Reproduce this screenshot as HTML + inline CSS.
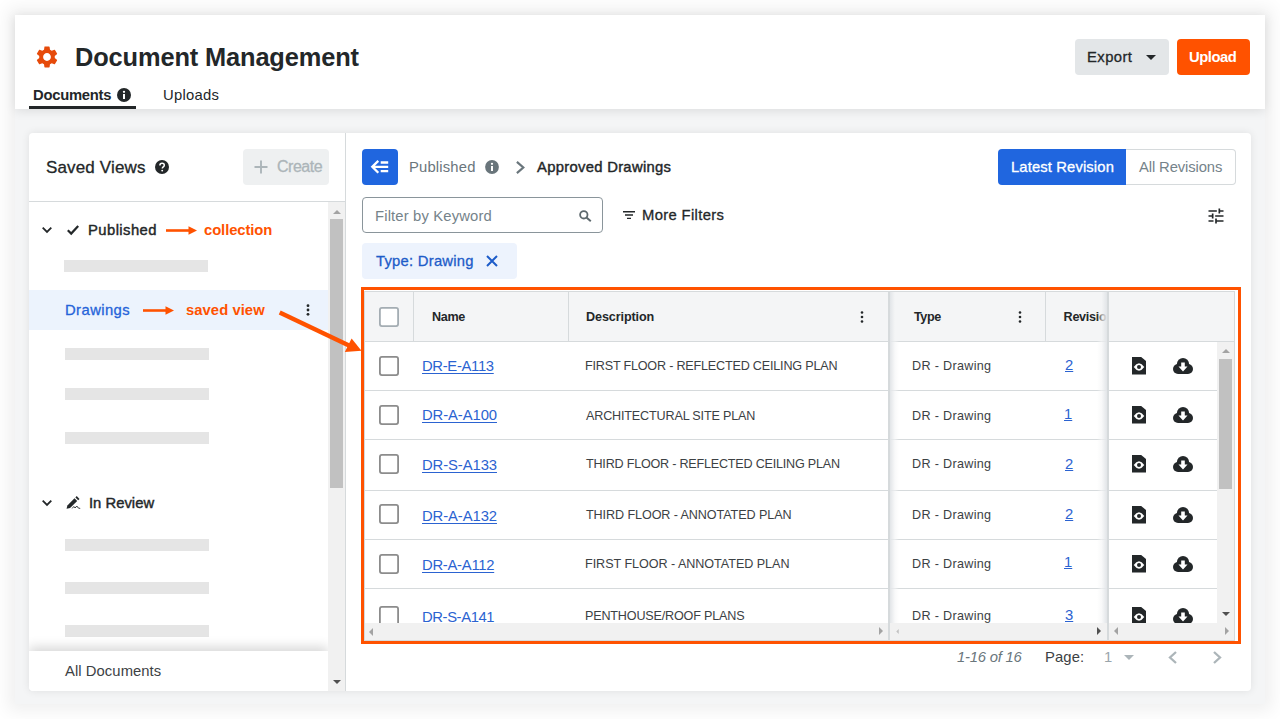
<!DOCTYPE html>
<html lang="en">
<head>
<meta charset="utf-8">
<title>Document Management</title>
<style>
*{box-sizing:border-box;margin:0;padding:0}
html,body{width:1280px;height:719px;overflow:hidden;background:#fff}
body{font-family:"Liberation Sans",sans-serif;color:#232729;position:relative;font-size:14px}
.a{position:absolute}
.t{position:absolute;white-space:nowrap;line-height:1}
svg{position:absolute;overflow:visible}
.bar{position:absolute;height:12px;width:144px;background:#e5e5e5}
.cb{position:absolute;left:379px;width:20px;height:20px;border:1.7px solid #8c8c8c;border-radius:2.500px;background:#fff}
.hl{position:absolute;height:1px;background:#d6dadc}
.vl{position:absolute;width:1px;background:#d6dadc}
</style>
</head>
<body>
<!-- app background -->
<div class="a" style="left:15px;top:15px;width:1250px;height:689px;background:#f4f5f6;box-shadow:0 0 16px 7px rgba(0,0,0,.062)"></div>
<!-- header -->
<div class="a" style="left:15px;top:15px;width:1250px;height:94px;background:#fff;box-shadow:0 2px 10px rgba(0,0,0,.10)"></div>
<svg style="left:33.900px;top:44px" width="26" height="26" viewBox="0 0 24 24"><path fill="#e64a0a" d="M19.14 12.94c.04-.3.06-.61.06-.94 0-.32-.02-.64-.07-.94l2.03-1.58a.49.49 0 0 0 .12-.61l-1.92-3.32a.488.488 0 0 0-.59-.22l-2.39.96c-.5-.38-1.03-.7-1.62-.94l-.36-2.54a.484.484 0 0 0-.48-.41h-3.84c-.24 0-.43.17-.47.41l-.36 2.54c-.59.24-1.13.57-1.62.94l-2.39-.96c-.22-.08-.47 0-.59.22L2.74 8.87c-.12.21-.08.47.12.61l2.03 1.58c-.05.3-.09.63-.09.94s.02.64.07.94l-2.03 1.58a.49.49 0 0 0-.12.61l1.92 3.32c.12.22.37.29.59.22l2.39-.96c.5.38 1.03.7 1.62.94l.36 2.54c.05.24.24.41.48.41h3.84c.24 0 .44-.17.47-.41l.36-2.54c.59-.24 1.13-.56 1.62-.94l2.39.96c.22.08.47 0 .59-.22l1.92-3.32c.12-.22.07-.47-.12-.61l-2.01-1.58zM12 15.6c-1.98 0-3.6-1.62-3.6-3.6s1.62-3.6 3.6-3.6 3.6 1.62 3.6 3.6-1.62 3.6-3.6 3.6z"/></svg>
<div class="a" style="left:29px;top:106px;width:107px;height:3px;background:#232729"></div>
<svg style="left:117px;top:88px" width="14" height="14" viewBox="0 0 14 14"><circle cx="7" cy="7" r="7" fill="#232729"/><rect x="6" y="6" width="2" height="5" fill="#fff"/><circle cx="7" cy="3.8" r="1.15" fill="#fff"/></svg>
<div class="a" style="left:1075px;top:39px;width:94px;height:36px;border-radius:4px;background:#e3e6e8"></div>
<svg style="left:1146px;top:54.5px" width="10" height="5" viewBox="0 0 10 5"><path d="M0 0h10L5 5z" fill="#232729"/></svg>
<div class="a" style="left:1177px;top:39px;width:73px;height:36px;border-radius:4px;background:#ff5200"></div>

<!-- cards -->
<div class="a" style="left:29px;top:133px;width:1222px;height:558px;background:#fff;border-radius:4px;box-shadow:0 0 8px rgba(0,0,0,.09)"></div>
<div class="vl" style="left:345px;top:133px;height:558px;background:#d6dadc"></div>

<!-- sidebar -->
<div class="a" style="left:243px;top:149px;width:86px;height:36px;border-radius:4px;background:#eef0f1"></div>
<svg style="left:253.5px;top:160px" width="14" height="14" viewBox="0 0 14 14"><path d="M7 0.500v13M0.500 7h13" stroke="#acb5b9" stroke-width="1.900" fill="none"/></svg>
<svg style="left:155px;top:160px" width="14" height="14" viewBox="0 0 14 14"><circle cx="7" cy="7" r="7" fill="#232729"/><path d="M4.9 5.4c0-1.3 1-2.1 2.2-2.1 1.300 0 2.200.8 2.200 1.900 0 1.600-2 1.700-2 3.200" stroke="#fff" stroke-width="1.5" fill="none"/><circle cx="7.200" cy="10.600" r=".95" fill="#fff"/></svg>
<div class="hl" style="left:29px;top:201px;width:316px"></div>
<!-- scrollbar -->
<div class="a" style="left:328px;top:202px;width:17px;height:489px;background:#f1f1f1"></div>
<div class="a" style="left:330px;top:219px;width:13px;height:269px;background:#c1c1c1"></div>
<svg style="left:332.500px;top:209.500px" width="8" height="4" viewBox="0 0 8 4"><path d="M0 4h8L4 0z" fill="#a3a3a3"/></svg>
<svg style="left:332.500px;top:679.500px" width="8" height="4" viewBox="0 0 8 4"><path d="M0 0h8L4 4z" fill="#505050"/></svg>
<!-- list -->
<svg style="left:42.200px;top:227.300px" width="10" height="6" viewBox="0 0 10 6"><path d="M0.700 0.700L5 5l4.300-4.300" stroke="#232729" stroke-width="1.800" fill="none"/></svg>
<svg style="left:67px;top:225px" width="12" height="10" viewBox="0 0 12 10"><path d="M0.800 5.300L4.200 8.600 11.200 1" stroke="#232729" stroke-width="2.200" fill="none"/></svg>
<svg style="left:166px;top:226px" width="32" height="9" viewBox="0 0 32 9"><path d="M0 4.500h25" stroke="#ff5200" stroke-width="2.600"/><path d="M22.500 0.300L31 4.500 22.500 8.700z" fill="#ff5200"/></svg>
<div class="bar" style="left:64px;top:260px"></div>
<div class="a" style="left:29px;top:290px;width:299px;height:40px;background:#ecf3fd"></div>
<svg style="left:142.500px;top:306px" width="32" height="9" viewBox="0 0 32 9"><path d="M0 4.500h25" stroke="#ff5200" stroke-width="2.600"/><path d="M22.500 0.300L31 4.500 22.500 8.700z" fill="#ff5200"/></svg>
<svg style="left:306px;top:304px" width="4" height="12" viewBox="0 0 4 12"><circle cx="2" cy="1.700" r="1.400" fill="#232729"/><circle cx="2" cy="6" r="1.400" fill="#232729"/><circle cx="2" cy="10.300" r="1.400" fill="#232729"/></svg>
<div class="bar" style="left:65px;top:348px"></div>
<div class="bar" style="left:65px;top:388px"></div>
<div class="bar" style="left:65px;top:432px"></div>
<svg style="left:42.200px;top:500.200px" width="10" height="6" viewBox="0 0 10 6"><path d="M0.700 0.700L5 5l4.300-4.300" stroke="#232729" stroke-width="1.800" fill="none"/></svg>
<svg style="left:65.500px;top:496px" width="15" height="13" viewBox="0 0 15 13"><path d="M0.600 12.700L1.400 9.400 8.500 2.300l2.700 2.700L4.100 12.100z" fill="#232729"/><path d="M9.400 1.400L10.700 0.100l2.800 2.800-1.300 1.300z" fill="#232729"/><path d="M6.200 12.400l1.600-1.900 1.300 1.500 1.700-2 1.600 2.100 1.800 0.300" stroke="#232729" stroke-width="0.900" fill="none"/></svg>
<div class="bar" style="left:65px;top:539px"></div>
<div class="bar" style="left:65px;top:582px"></div>
<div class="bar" style="left:65px;top:625px"></div>
<div class="a" style="left:29px;top:651px;width:299px;height:40px;background:#fff;border-radius:0 0 0 4px;box-shadow:0 -4px 12px rgba(0,0,0,.16);clip-path:inset(-24px 0 0 0)"></div>

<!-- right top -->
<div class="a" style="left:362px;top:149px;width:36px;height:36px;border-radius:4px;background:#2066df"></div>
<svg style="left:370px;top:160px" width="19" height="14" viewBox="0 0 19 14"><path d="M2.500 6.800h15.700M8.300 0.900L2.300 6.800l6 5.900" stroke="#fff" stroke-width="2.300" fill="none"/><path d="M10.700 2.500h7.500M10.700 11.200h7.500" stroke="#fff" stroke-width="2.300" fill="none"/></svg>
<svg style="left:484.800px;top:159.800px" width="14" height="14" viewBox="0 0 14 14"><circle cx="7" cy="7" r="6.900" fill="#69757b"/><rect x="6" y="6" width="2" height="5" fill="#fff"/><circle cx="7" cy="3.800" r="1.150" fill="#fff"/></svg>
<svg style="left:515.800px;top:160.500px" width="9" height="13" viewBox="0 0 9 13"><path d="M0.900 0.900L7.300 6.500 0.900 12.100" stroke="#6a767c" stroke-width="2.200" fill="none"/></svg>
<div class="a" style="left:998px;top:149px;width:128px;height:36px;border-radius:4px 0 0 4px;background:#2066df"></div>
<div class="a" style="left:1126px;top:149px;width:110px;height:36px;border-radius:0 4px 4px 0;border:1px solid #d6dadc;border-left:none;background:#fff"></div>
<div class="a" style="left:362px;top:197px;width:241px;height:36px;border-radius:4px;border:1px solid #8a959b;background:#fff"></div>
<svg style="left:579px;top:209.500px" width="13" height="12" viewBox="0 0 13 12"><circle cx="4.800" cy="4.800" r="3.700" stroke="#5e696e" stroke-width="1.800" fill="none"/><path d="M7.500 7.500l4.300 3.800" stroke="#5e696e" stroke-width="2" fill="none"/></svg>
<svg style="left:623px;top:211px" width="12" height="9" viewBox="0 0 12 9"><path d="M0 0.700h12M2 4h8M4 7.400h4" stroke="#232729" stroke-width="1.400" fill="none"/></svg>
<svg style="left:1205.500px;top:205.500px" width="20" height="20" viewBox="0 0 24 24"><path fill="#232729" d="M3 17v2h6v-2H3zM3 5v2h10V5H3zm10 16v-2h8v-2h-8v-2h-2v6h2zM7 9v2H3v2h4v2h2V9H7zm14 4v-2H11v2h10zm-6-4h2V7h4V5h-4V3h-2v6z"/></svg>
<div class="a" style="left:362px;top:243px;width:155px;height:36px;border-radius:4px;background:#edf3fd"></div>
<svg style="left:486px;top:255px" width="12" height="12" viewBox="0 0 12 12"><path d="M1 1l10 10M11 1L1 11" stroke="#1d5cc9" stroke-width="2" fill="none"/></svg>

<!-- table -->
<div class="a" id="grid" style="left:364px;top:291px;width:871px;height:350px;background:#fff;border:1px solid #d6dadc;overflow:hidden"></div>
<div class="a" id="gridc" style="left:0;top:0;width:1280px;height:719px;clip-path:inset(292px 46px 79px 365px)">
  <!-- header bg -->
  <div class="a" style="left:365px;top:291px;width:869px;height:50px;background:#f4f5f6"></div>
  <div class="hl" style="left:365px;top:341px;width:869px"></div>
  <div class="vl" style="left:413px;top:291px;height:50px"></div>
  <div class="vl" style="left:568px;top:291px;height:50px"></div>
  <div class="vl" style="left:1045px;top:291px;height:50px"></div>
  <!-- row lines -->
  <div class="hl" style="left:365px;top:390px;width:852px"></div>
  <div class="hl" style="left:365px;top:439px;width:852px"></div>
  <div class="hl" style="left:365px;top:490px;width:852px"></div>
  <div class="hl" style="left:365px;top:539px;width:852px"></div>
  <div class="hl" style="left:365px;top:588px;width:852px"></div>
  <!-- checkboxes -->
  <svg style="left:379px;top:307px" width="20" height="20" viewBox="0 0 20 20"><rect x="0.900" y="0.900" width="18.200" height="18.200" rx="2" fill="#fff" stroke="#a4adb3" stroke-width="1.800"/></svg>
  <svg style="left:379px;top:356px" width="20" height="20" viewBox="0 0 20 20"><rect x="0.900" y="0.900" width="18.200" height="18.200" rx="2" fill="#fff" stroke="#8c8c8c" stroke-width="1.800"/></svg>
  <svg style="left:379px;top:405px" width="20" height="20" viewBox="0 0 20 20"><rect x="0.900" y="0.900" width="18.200" height="18.200" rx="2" fill="#fff" stroke="#8c8c8c" stroke-width="1.800"/></svg>
  <svg style="left:379px;top:454px" width="20" height="20" viewBox="0 0 20 20"><rect x="0.900" y="0.900" width="18.200" height="18.200" rx="2" fill="#fff" stroke="#8c8c8c" stroke-width="1.800"/></svg>
  <svg style="left:379px;top:504px" width="20" height="20" viewBox="0 0 20 20"><rect x="0.900" y="0.900" width="18.200" height="18.200" rx="2" fill="#fff" stroke="#8c8c8c" stroke-width="1.800"/></svg>
  <svg style="left:379px;top:554px" width="20" height="20" viewBox="0 0 20 20"><rect x="0.900" y="0.900" width="18.200" height="18.200" rx="2" fill="#fff" stroke="#8c8c8c" stroke-width="1.800"/></svg>
  <svg style="left:379px;top:606px" width="20" height="20" viewBox="0 0 20 20"><rect x="0.900" y="0.900" width="18.200" height="18.200" rx="2" fill="#fff" stroke="#8c8c8c" stroke-width="1.800"/></svg>
  <span class="t" style="left:422.00px;top:359.00px;font-size:14.8px;color:#2b63d1;text-decoration:underline;text-underline-offset:1.5px;text-decoration-thickness:1px;letter-spacing:-0.312px;">DR-E-A113</span><span class="t" style="left:422.00px;top:408.00px;font-size:14.8px;color:#2b63d1;text-decoration:underline;text-underline-offset:1.5px;text-decoration-thickness:1px;letter-spacing:-0.075px;">DR-A-A100</span><span class="t" style="left:422.00px;top:458.00px;font-size:14.8px;color:#2b63d1;text-decoration:underline;text-underline-offset:1.5px;text-decoration-thickness:1px;letter-spacing:-0.075px;">DR-S-A133</span><span class="t" style="left:422.00px;top:509.00px;font-size:14.8px;color:#2b63d1;text-decoration:underline;text-underline-offset:1.5px;text-decoration-thickness:1px;letter-spacing:-0.075px;">DR-A-A132</span><span class="t" style="left:422.00px;top:558.00px;font-size:14.8px;color:#2b63d1;text-decoration:underline;text-underline-offset:1.5px;text-decoration-thickness:1px;letter-spacing:-0.262px;">DR-A-A112</span><span class="t" style="left:422.00px;top:610.00px;font-size:14.8px;color:#2b63d1;text-decoration:underline;text-underline-offset:1.5px;text-decoration-thickness:1px;letter-spacing:-0.387px;">DR-S-A141</span><span class="t" style="left:585.00px;top:360.00px;font-size:12.6px;color:#3c4144;letter-spacing:-0.197px;">FIRST FLOOR - REFLECTED CEILING PLAN</span><span class="t" style="left:586.00px;top:410.00px;font-size:12.6px;color:#3c4144;letter-spacing:-0.168px;">ARCHITECTURAL SITE PLAN</span><span class="t" style="left:586.00px;top:458.00px;font-size:12.6px;color:#3c4144;letter-spacing:-0.220px;">THIRD FLOOR - REFLECTED CEILING PLAN</span><span class="t" style="left:586.00px;top:509.00px;font-size:12.6px;color:#3c4144;letter-spacing:-0.093px;">THIRD FLOOR - ANNOTATED PLAN</span><span class="t" style="left:585.00px;top:558.00px;font-size:12.6px;color:#3c4144;letter-spacing:-0.044px;">FIRST FLOOR - ANNOTATED PLAN</span><span class="t" style="left:585.00px;top:610.00px;font-size:12.6px;color:#3c4144;letter-spacing:-0.179px;">PENTHOUSE/ROOF PLANS</span><span class="t" style="left:912.00px;top:360.00px;font-size:12.6px;color:#3c4144;letter-spacing:0.318px;">DR - Drawing</span><span class="t" style="left:912.00px;top:410.00px;font-size:12.6px;color:#3c4144;letter-spacing:0.318px;">DR - Drawing</span><span class="t" style="left:912.00px;top:458.00px;font-size:12.6px;color:#3c4144;letter-spacing:0.318px;">DR - Drawing</span><span class="t" style="left:912.00px;top:509.00px;font-size:12.6px;color:#3c4144;letter-spacing:0.318px;">DR - Drawing</span><span class="t" style="left:912.00px;top:558.00px;font-size:12.6px;color:#3c4144;letter-spacing:0.318px;">DR - Drawing</span><span class="t" style="left:912.00px;top:610.00px;font-size:12.6px;color:#3c4144;letter-spacing:0.318px;">DR - Drawing</span><span class="t" style="left:1065.00px;top:358.00px;font-size:14.8px;color:#2b63d1;text-decoration:underline;text-underline-offset:0.5px;text-decoration-thickness:1px;letter-spacing:0.000px;">2</span><span class="t" style="left:1064.00px;top:407.00px;font-size:14.8px;color:#2b63d1;text-decoration:underline;text-underline-offset:0.5px;text-decoration-thickness:1px;letter-spacing:0.000px;">1</span><span class="t" style="left:1065.00px;top:457.00px;font-size:14.8px;color:#2b63d1;text-decoration:underline;text-underline-offset:0.5px;text-decoration-thickness:1px;letter-spacing:0.000px;">2</span><span class="t" style="left:1065.00px;top:507.00px;font-size:14.8px;color:#2b63d1;text-decoration:underline;text-underline-offset:0.5px;text-decoration-thickness:1px;letter-spacing:0.000px;">2</span><span class="t" style="left:1064.00px;top:555.00px;font-size:14.8px;color:#2b63d1;text-decoration:underline;text-underline-offset:0.5px;text-decoration-thickness:1px;letter-spacing:0.000px;">1</span><span class="t" style="left:1065.00px;top:608.00px;font-size:14.8px;color:#2b63d1;text-decoration:underline;text-underline-offset:0.5px;text-decoration-thickness:1px;letter-spacing:0.000px;">3</span>
  <span class="t nf" style="left:1063.600px;top:310.500px;font-size:12.600px;font-weight:bold;letter-spacing:-0.300px">Revision</span>
  <!-- kebabs -->
  <svg style="left:860px;top:311px" width="4" height="12" viewBox="0 0 4 12"><circle cx="2" cy="1.500" r="1.300" fill="#232729"/><circle cx="2" cy="6" r="1.300" fill="#232729"/><circle cx="2" cy="10.500" r="1.300" fill="#232729"/></svg>
  <svg style="left:1017.500px;top:311px" width="4" height="12" viewBox="0 0 4 12"><circle cx="2" cy="1.500" r="1.300" fill="#232729"/><circle cx="2" cy="6" r="1.300" fill="#232729"/><circle cx="2" cy="10.500" r="1.300" fill="#232729"/></svg>
  <!-- pinned left shadow -->
  <div class="a" style="left:888px;top:291px;width:2px;height:350px;background:#d6dadc"></div>
  <div class="a" style="left:890px;top:291px;width:9px;height:332px;background:linear-gradient(to right,rgba(226,229,232,1),rgba(244,245,246,.6) 55%,rgba(255,255,255,0))"></div>
  <!-- pinned right -->
  <div class="a" style="left:1097px;top:291px;width:10px;height:332px;background:linear-gradient(to left,rgba(226,229,232,1),rgba(244,245,246,.6) 55%,rgba(255,255,255,0))"></div>
  <div class="a" style="left:1107px;top:291px;width:128px;height:50px;background:#f4f5f6"></div>
  <div class="a" style="left:1107px;top:342px;width:110px;height:281px;background:#fff"></div>
  <div class="hl" style="left:1107px;top:341px;width:128px"></div>
  <div class="hl" style="left:1107px;top:390px;width:110px"></div>
  <div class="hl" style="left:1107px;top:439px;width:110px"></div>
  <div class="hl" style="left:1107px;top:490px;width:110px"></div>
  <div class="hl" style="left:1107px;top:539px;width:110px"></div>
  <div class="hl" style="left:1107px;top:588px;width:110px"></div>
  <div class="a" style="left:1107px;top:291px;width:2px;height:350px;background:#d6dadc"></div>
  <svg style="left:1132px;top:357.2px" width="14" height="17.600" viewBox="0 0 14 17.600"><path fill="#232729" d="M0 0h9.200l4.800 4v13.600H0z"/><path d="M1.700 10Q7 2.700 12.300 10Q7 17.300 1.700 10z" fill="#fff"/><circle cx="7" cy="10" r="2" fill="#232729"/></svg><svg style="left:1173px;top:358.0px" width="20" height="16" viewBox="0 0 20 16"><g fill="#232729"><circle cx="10" cy="6.100" r="6.100"/><circle cx="5" cy="11" r="5"/><circle cx="15" cy="11" r="5"/><rect x="5" y="8" width="10" height="8"/></g><path fill="#fff" d="M8.200 4.500h3.600v4h2.700L10 13.400 5.500 8.500h2.700z"/></svg><svg style="left:1132px;top:406.2px" width="14" height="17.600" viewBox="0 0 14 17.600"><path fill="#232729" d="M0 0h9.200l4.800 4v13.600H0z"/><path d="M1.700 10Q7 2.700 12.300 10Q7 17.300 1.700 10z" fill="#fff"/><circle cx="7" cy="10" r="2" fill="#232729"/></svg><svg style="left:1173px;top:407.0px" width="20" height="16" viewBox="0 0 20 16"><g fill="#232729"><circle cx="10" cy="6.100" r="6.100"/><circle cx="5" cy="11" r="5"/><circle cx="15" cy="11" r="5"/><rect x="5" y="8" width="10" height="8"/></g><path fill="#fff" d="M8.200 4.500h3.600v4h2.700L10 13.400 5.500 8.500h2.700z"/></svg><svg style="left:1132px;top:455.2px" width="14" height="17.600" viewBox="0 0 14 17.600"><path fill="#232729" d="M0 0h9.200l4.800 4v13.600H0z"/><path d="M1.700 10Q7 2.700 12.300 10Q7 17.300 1.700 10z" fill="#fff"/><circle cx="7" cy="10" r="2" fill="#232729"/></svg><svg style="left:1173px;top:456.0px" width="20" height="16" viewBox="0 0 20 16"><g fill="#232729"><circle cx="10" cy="6.100" r="6.100"/><circle cx="5" cy="11" r="5"/><circle cx="15" cy="11" r="5"/><rect x="5" y="8" width="10" height="8"/></g><path fill="#fff" d="M8.200 4.500h3.600v4h2.700L10 13.400 5.500 8.500h2.700z"/></svg><svg style="left:1132px;top:505.7px" width="14" height="17.600" viewBox="0 0 14 17.600"><path fill="#232729" d="M0 0h9.200l4.800 4v13.600H0z"/><path d="M1.700 10Q7 2.700 12.300 10Q7 17.300 1.700 10z" fill="#fff"/><circle cx="7" cy="10" r="2" fill="#232729"/></svg><svg style="left:1173px;top:506.5px" width="20" height="16" viewBox="0 0 20 16"><g fill="#232729"><circle cx="10" cy="6.100" r="6.100"/><circle cx="5" cy="11" r="5"/><circle cx="15" cy="11" r="5"/><rect x="5" y="8" width="10" height="8"/></g><path fill="#fff" d="M8.200 4.500h3.600v4h2.700L10 13.400 5.500 8.500h2.700z"/></svg><svg style="left:1132px;top:554.7px" width="14" height="17.600" viewBox="0 0 14 17.600"><path fill="#232729" d="M0 0h9.200l4.800 4v13.600H0z"/><path d="M1.700 10Q7 2.700 12.300 10Q7 17.300 1.700 10z" fill="#fff"/><circle cx="7" cy="10" r="2" fill="#232729"/></svg><svg style="left:1173px;top:555.5px" width="20" height="16" viewBox="0 0 20 16"><g fill="#232729"><circle cx="10" cy="6.100" r="6.100"/><circle cx="5" cy="11" r="5"/><circle cx="15" cy="11" r="5"/><rect x="5" y="8" width="10" height="8"/></g><path fill="#fff" d="M8.200 4.500h3.600v4h2.700L10 13.400 5.500 8.500h2.700z"/></svg><svg style="left:1132px;top:607.2px" width="14" height="17.600" viewBox="0 0 14 17.600"><path fill="#232729" d="M0 0h9.200l4.800 4v13.600H0z"/><path d="M1.700 10Q7 2.700 12.300 10Q7 17.300 1.700 10z" fill="#fff"/><circle cx="7" cy="10" r="2" fill="#232729"/></svg><svg style="left:1173px;top:608.0px" width="20" height="16" viewBox="0 0 20 16"><g fill="#232729"><circle cx="10" cy="6.100" r="6.100"/><circle cx="5" cy="11" r="5"/><circle cx="15" cy="11" r="5"/><rect x="5" y="8" width="10" height="8"/></g><path fill="#fff" d="M8.200 4.500h3.600v4h2.700L10 13.400 5.500 8.500h2.700z"/></svg>
  <!-- v scrollbar -->
  <div class="a" style="left:1217px;top:342px;width:17px;height:281px;background:#f1f1f1"></div>
  <div class="a" style="left:1219px;top:359px;width:13px;height:130px;background:#c1c1c1"></div>
  <svg style="left:1221.500px;top:349px" width="8" height="4" viewBox="0 0 8 4"><path d="M0 4h8L4 0z" fill="#a3a3a3"/></svg>
  <svg style="left:1221.500px;top:611.500px" width="8" height="4" viewBox="0 0 8 4"><path d="M0 0h8L4 4z" fill="#505050"/></svg>
  <!-- h scrollbars -->
  <div class="a" style="left:365px;top:623px;width:869px;height:17px;background:#f1f1f1"></div>
  <div class="vl" style="left:888px;top:623px;height:17px;width:2px"></div>
  <div class="vl" style="left:1107px;top:623px;height:17px;width:2px"></div>
  <svg style="left:369px;top:627.500px" width="4" height="8" viewBox="0 0 4 8"><path d="M4 0v8L0 4z" fill="#a3a3a3"/></svg>
  <svg style="left:878.500px;top:627px" width="4" height="8" viewBox="0 0 4 8"><path d="M0 0v8L4 4z" fill="#a3a3a3"/></svg>
  <svg style="left:895.500px;top:629px" width="3" height="5" viewBox="0 0 4 8"><path d="M4 0v8L0 4z" fill="#c1c1c1"/></svg>
  <svg style="left:1097px;top:627px" width="4" height="8" viewBox="0 0 4 8"><path d="M0 0v8L4 4z" fill="#505050"/></svg>
  <svg style="left:1114px;top:627px" width="4" height="8" viewBox="0 0 4 8"><path d="M4 0v8L0 4z" fill="#a3a3a3"/></svg>
  <svg style="left:1224.500px;top:627px" width="4" height="8" viewBox="0 0 4 8"><path d="M0 0v8L4 4z" fill="#a3a3a3"/></svg>
</div>
<!-- orange highlight -->
<div class="a" style="left:361px;top:287px;width:880px;height:357px;border:3px solid #ff5200"></div>
<svg style="left:0;top:0" width="1280" height="719" viewBox="0 0 1280 719"><path d="M279.700 312.500L349 345.500" stroke="#ff5200" stroke-width="4.400" fill="none"/><path d="M361.500 350.700L344.800 351.900 351.600 338.600z" fill="#ff5200"/></svg>

<!-- footer -->
<svg style="left:1124px;top:654.500px" width="10" height="5" viewBox="0 0 10 5"><path d="M0 0h10L5 5z" fill="#acb5b9"/></svg>
<svg style="left:1168px;top:651px" width="9" height="13" viewBox="0 0 9 13"><path d="M8 1L2 6.500 8 12" stroke="#acb5b9" stroke-width="2.300" fill="none"/></svg>
<svg style="left:1213px;top:651px" width="9" height="13" viewBox="0 0 9 13"><path d="M1 1L7 6.500 1 12" stroke="#acb5b9" stroke-width="2.300" fill="none"/></svg>

<span class="t" style="left:75.00px;top:45.00px;font-size:25.4px;color:#232729;font-weight:bold;letter-spacing:-0.133px;">Document Management</span><span class="t" style="left:33.00px;top:88.00px;font-size:14.8px;color:#232729;font-weight:bold;letter-spacing:-0.263px;">Documents</span><span class="t" style="left:163.00px;top:88.00px;font-size:14.8px;color:#232729;letter-spacing:0.250px;">Uploads</span><span class="t" style="left:1087.00px;top:50.00px;font-size:14.8px;color:#232729;-webkit-text-stroke:0.3px;letter-spacing:0.440px;">Export</span><span class="t" style="left:1189.00px;top:50.00px;font-size:14.8px;color:#fff;font-weight:bold;letter-spacing:-0.460px;">Upload</span><span class="t" style="left:46.00px;top:159.00px;font-size:17px;color:#232729;-webkit-text-stroke:0.3px;letter-spacing:0.150px;">Saved Views</span><span class="t" style="left:277.00px;top:159.00px;font-size:16px;color:#acb5b9;-webkit-text-stroke:0.3px;letter-spacing:-0.500px;">Create</span><span class="t" style="left:88.00px;top:223.00px;font-size:14.8px;color:#232729;-webkit-text-stroke:0.42px;letter-spacing:0.438px;">Published</span><span class="t" style="left:204.00px;top:223.00px;font-size:14.8px;color:#ff5200;font-weight:bold;letter-spacing:-0.083px;">collection</span><span class="t" style="left:65.00px;top:303.00px;font-size:14.8px;color:#2563d9;-webkit-text-stroke:0.3px;letter-spacing:0.429px;">Drawings</span><span class="t" style="left:186.00px;top:303.00px;font-size:14.8px;color:#ff5200;font-weight:bold;letter-spacing:0.056px;">saved view</span><span class="t" style="left:89.00px;top:496.00px;font-size:14.8px;color:#232729;-webkit-text-stroke:0.42px;letter-spacing:0.012px;">In Review</span><span class="t" style="left:65.00px;top:664.00px;font-size:14.8px;color:#3c4144;letter-spacing:0.067px;">All Documents</span><span class="t" style="left:409.00px;top:160.00px;font-size:14.8px;color:#6a767c;letter-spacing:0.175px;">Published</span><span class="t" style="left:537.00px;top:160.00px;font-size:14.8px;color:#232729;-webkit-text-stroke:0.42px;letter-spacing:0.300px;">Approved Drawings</span><span class="t" style="left:1011.00px;top:160.00px;font-size:14.8px;color:#fff;-webkit-text-stroke:0.3px;letter-spacing:0.121px;">Latest Revision</span><span class="t" style="left:1139.00px;top:160.00px;font-size:14.8px;color:#75838a;letter-spacing:-0.117px;">All Revisions</span><span class="t" style="left:375.00px;top:209.00px;font-size:14.8px;color:#75838a;letter-spacing:0.150px;">Filter by Keyword</span><span class="t" style="left:642.00px;top:208.00px;font-size:14.8px;color:#232729;-webkit-text-stroke:0.3px;letter-spacing:0.345px;">More Filters</span><span class="t" style="left:376.00px;top:254.00px;font-size:14.8px;color:#1d5cc9;-webkit-text-stroke:0.3px;letter-spacing:0.246px;">Type: Drawing</span><span class="t" style="left:432.00px;top:311.00px;font-size:12.6px;color:#232729;font-weight:bold;letter-spacing:-0.333px;">Name</span><span class="t" style="left:586.00px;top:311.00px;font-size:12.6px;color:#232729;font-weight:bold;letter-spacing:-0.100px;">Description</span><span class="t" style="left:914.00px;top:311.00px;font-size:12.6px;color:#232729;font-weight:bold;letter-spacing:-0.400px;">Type</span><span class="t" style="left:957.00px;top:650.00px;font-size:14.8px;color:#6a767c;font-style:italic;letter-spacing:-0.211px;">1-16 of 16</span><span class="t" style="left:1045.00px;top:650.00px;font-size:14.8px;color:#3c4144;letter-spacing:0.125px;">Page:</span><span class="t" style="left:1104.00px;top:650.00px;font-size:14.8px;color:#9aa5ab;letter-spacing:0.000px;">1</span>
</body>
</html>
